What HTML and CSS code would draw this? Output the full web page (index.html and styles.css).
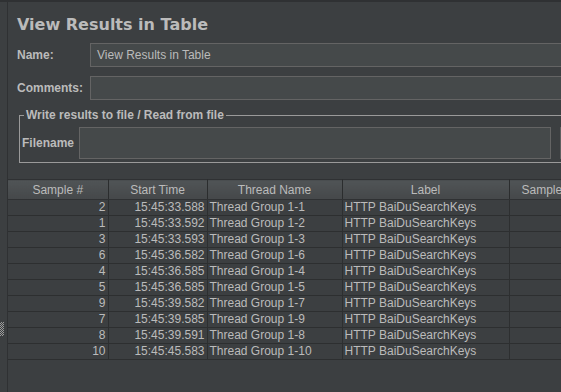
FILE: index.html
```html
<!DOCTYPE html>
<html>
<head>
<meta charset="utf-8">
<link rel="stylesheet" href="styles.css">
</head>
<body>
<div class="app">
  <div class="divider"><div class="grip"></div></div>
  <div class="panel">
    <div class="title">View Results in Table</div>
    <div class="form-row name-row">
      <label class="lbl">Name:</label>
      <div class="field">View Results in Table</div>
    </div>
    <div class="form-row comments-row">
      <label class="lbl">Comments:</label>
      <div class="field"></div>
    </div>
    <div class="group">
      <div class="legend">Write results to file / Read from file</div>
      <div class="file-row">
        <label class="lbl">Filename</label>
        <div class="field file-field"></div>
        <div class="browse"></div>
      </div>
    </div>
    <div class="table-wrap">
      <table class="results">
        <colgroup>
          <col class="c1"><col class="c2"><col class="c3"><col class="c4"><col class="c5">
        </colgroup>
        <thead>
          <tr><th>Sample #</th><th>Start Time</th><th>Thread Name</th><th>Label</th><th>Sample Time(ms)</th></tr>
        </thead>
        <tbody>
          <tr><td class="r">2</td><td class="r">15:45:33.588</td><td>Thread Group 1-1</td><td>HTTP BaiDuSearchKeys</td><td></td></tr>
          <tr><td class="r">1</td><td class="r">15:45:33.592</td><td>Thread Group 1-2</td><td>HTTP BaiDuSearchKeys</td><td></td></tr>
          <tr><td class="r">3</td><td class="r">15:45:33.593</td><td>Thread Group 1-3</td><td>HTTP BaiDuSearchKeys</td><td></td></tr>
          <tr><td class="r">6</td><td class="r">15:45:36.582</td><td>Thread Group 1-6</td><td>HTTP BaiDuSearchKeys</td><td></td></tr>
          <tr><td class="r">4</td><td class="r">15:45:36.585</td><td>Thread Group 1-4</td><td>HTTP BaiDuSearchKeys</td><td></td></tr>
          <tr><td class="r">5</td><td class="r">15:45:36.585</td><td>Thread Group 1-5</td><td>HTTP BaiDuSearchKeys</td><td></td></tr>
          <tr><td class="r">9</td><td class="r">15:45:39.582</td><td>Thread Group 1-7</td><td>HTTP BaiDuSearchKeys</td><td></td></tr>
          <tr><td class="r">7</td><td class="r">15:45:39.585</td><td>Thread Group 1-9</td><td>HTTP BaiDuSearchKeys</td><td></td></tr>
          <tr><td class="r">8</td><td class="r">15:45:39.591</td><td>Thread Group 1-8</td><td>HTTP BaiDuSearchKeys</td><td></td></tr>
          <tr><td class="r">10</td><td class="r">15:45:45.583</td><td>Thread Group 1-10</td><td>HTTP BaiDuSearchKeys</td><td></td></tr>
        </tbody>
      </table>
    </div>
  </div>
</div>
</body>
</html>
```

FILE: styles.css
```css
html, body {
  margin: 0;
  padding: 0;
  background: #3c3f41;
  overflow: hidden;
}
body {
  width: 561px;
  height: 392px;
  font-family: "Liberation Sans", Arial, sans-serif;
  font-size: 12px;
  color: #bbbbbb;
}
.app {
  display: flex;
  height: 392px;
  border-top: 2px solid #2f3133;
  box-sizing: border-box;
}
.divider {
  width: 7px;
  flex: none;
  border-right: 1px solid #2f3133;
  position: relative;
}
.grip {
  position: absolute;
  left: 0;
  top: 320px;
  width: 4px;
  height: 14px;
  background-image: repeating-conic-gradient(#9a9a9a 0 25%, #3c3f41 0 50%);
  background-size: 2px 2px;
}
.panel {
  flex: 1;
  min-width: 0;
  display: flex;
  flex-direction: column;
}
.title {
  font-family: "DejaVu Sans", "Liberation Sans", sans-serif;
  font-size: 16px;
  font-weight: bold;
  padding: 13px 0 0 9px;
  height: 28px;
  line-height: 20px;
}
.form-row {
  display: flex;
  align-items: center;
  padding-left: 9px;
}
.comments-row {
  margin-top: 9px;
}
.lbl {
  font-weight: bold;
  flex: none;
}
.form-row .lbl {
  width: 73px;
}
.field {
  flex: 1;
  height: 22px;
  background: #45494a;
  border: 1px solid #646464;
  border-right: none;
  line-height: 22px;
  padding-left: 6px;
}
.group {
  margin: 15px 0 0 11px;
  border: 1px solid #9a9a9a;
  border-right: none;
  position: relative;
  padding-top: 11px;
  box-sizing: border-box;
  height: 48px;
}
.legend {
  position: absolute;
  top: -9px;
  left: 4px;
  padding: 0 2px;
  background: #3c3f41;
  font-weight: bold;
  line-height: 16px;
}
.file-row {
  display: flex;
  align-items: center;
  padding-left: 2px;
}
.file-row .lbl {
  width: 57px;
}
.file-field {
  height: 30px;
  flex: none;
  width: 470px;
  border-right: 1px solid #646464;
  padding: 0;
}
.browse {
  margin-left: 9px;
  width: 12px;
  height: 32px;
  background: #4c5052;
  border: 1px solid #5e6060;
  border-right: none;
  border-radius: 3px 0 0 3px;
  box-sizing: border-box;
}
.table-wrap {
  margin-top: 16px;
  flex: 1;
  overflow: hidden;
}
.results {
  border-collapse: collapse;
  table-layout: fixed;
  width: 620px;
}
.c1 { width: 100px; }
.c2 { width: 99px; }
.c3 { width: 135px; }
.c4 { width: 167px; }
.c5 { width: 119px; }
.results th {
  height: 19px;
  padding: 0;
  font-weight: normal;
  text-align: center;
  background: linear-gradient(#505456, #45484a);
  border-top: 1px solid #2f3133;
  border-bottom: 1px solid #2f3133;
  border-right: 1px solid #2b2d2e;
  white-space: nowrap;
  overflow: hidden;
  line-height: 18px;
}
.results td {
  height: 15px;
  padding: 0 2px;
  border-bottom: 1px solid #2d2f30;
  border-right: 1px solid #2d2f30;
  white-space: nowrap;
  overflow: hidden;
  line-height: 15px;
}
.results td.r {
  text-align: right;
}
```
